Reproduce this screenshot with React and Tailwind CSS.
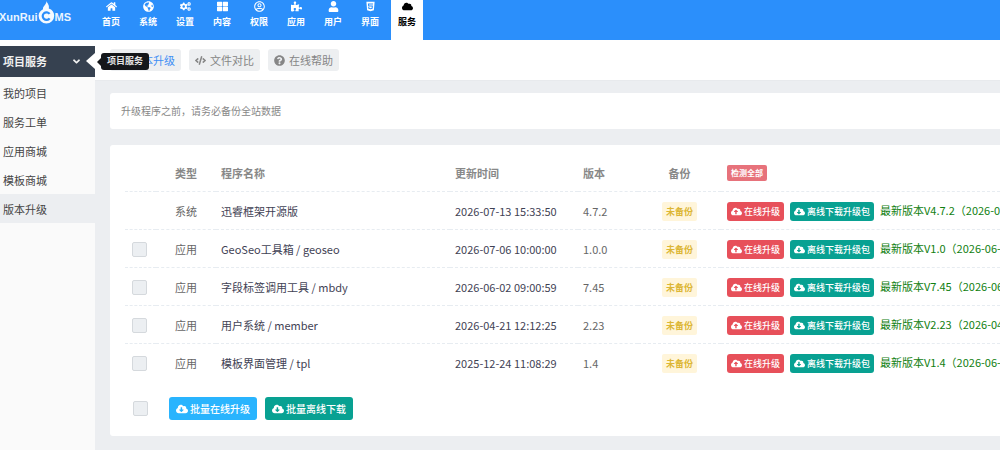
import {
  FaHome,
  FaGlobeAmericas,
  FaCogs,
  FaThLarge,
  FaRegUserCircle,
  FaPuzzlePiece,
  FaUser,
  FaHtml5,
  FaCloud,
  FaCode,
  FaQuestionCircle,
  FaCloudUploadAlt,
  FaCloudDownloadAlt,
  FaAngleDown,
  FaArrowCircleUp,
} from "react-icons/fa";

const NAV = [
  { label: "首页", Icon: FaHome },
  { label: "系统", Icon: FaGlobeAmericas },
  { label: "设置", Icon: FaCogs },
  { label: "内容", Icon: FaThLarge },
  { label: "权限", Icon: FaRegUserCircle },
  { label: "应用", Icon: FaPuzzlePiece },
  { label: "用户", Icon: FaUser },
  { label: "界面", Icon: FaHtml5 },
  { label: "服务", Icon: FaCloud, active: true },
];

const MENU = ["我的项目", "服务工单", "应用商城", "模板商城", "版本升级"];

const ROWS = [
  { type: "系统", name: "迅睿框架开源版", time: "2026-07-13 15:33:50", version: "4.7.2", latest: "最新版本V4.7.2（2026-07-13）" },
  { type: "应用", name: "GeoSeo工具箱 / geoseo", time: "2026-07-06 10:00:00", version: "1.0.0", latest: "最新版本V1.0（2026-06-06）", selectable: true },
  { type: "应用", name: "字段标签调用工具 / mbdy", time: "2026-06-02 09:00:59", version: "7.45", latest: "最新版本V7.45（2026-06-02）", selectable: true },
  { type: "应用", name: "用户系统 / member", time: "2026-04-21 12:12:25", version: "2.23", latest: "最新版本V2.23（2026-04-21）", selectable: true },
  { type: "应用", name: "模板界面管理 / tpl", time: "2025-12-24 11:08:29", version: "1.4", latest: "最新版本V1.4（2026-06-24）", selectable: true },
];

function Logo() {
  return (
    <a href="#home" aria-label="XunRuiCMS" className="-ml-[1px] flex w-[96px] shrink-0 items-start font-['Liberation_Sans',sans-serif] text-[11px] leading-4 font-bold text-[#e9f4ff]">
      <span className="pt-[9px]">XunRui</span>
      <svg viewBox="0 0 17 24" className="h-6 w-[17px] shrink-0" aria-hidden="true">
        <path fill="#f4faff" d="M8.4 1C9.4 3.6 11.6 5 10.8 8.6C14.2 9.6 16.2 12.4 16.2 15.8A7.8 7.8 0 0 1 0.6 15.8C0.6 12.8 2.4 10.6 5 9.2C4.6 6 8.8 4.6 8.4 1Z" />
        <path fill="none" stroke="#2b8ffb" strokeWidth="2.2" d="M11.6 13.9A3.8 3.8 0 1 0 11.6 18.3" />
      </svg>
      <span className="pt-[9px]">MS</span>
    </a>
  );
}

function CheckBox({ label }) {
  return (
    <input
      type="checkbox"
      aria-label={label}
      className="block size-[15px] appearance-none rounded-[2px] border border-[#d5d9dd] bg-[#eceff2] checked:bg-[#2b8ffb]"
    />
  );
}

function Tab({ Icon, children, active }) {
  return (
    <a
      href="#tab"
      className={`flex h-[22px] items-center gap-1 rounded-[3px] bg-[#edeff1] px-[6px] text-[11px] leading-4 ${active ? "text-[#3d8ef5]" : "text-[#868686]"}`}
    >
      <Icon className="size-[11px]" />
      {children}
    </a>
  );
}

export default function App() {
  return (
    <div className="flex min-h-screen flex-col overflow-hidden whitespace-nowrap bg-white font-['Noto_Sans_CJK_SC',sans-serif] text-[11px] leading-4">
      <header className="flex h-10 bg-[#2b8ffb]">
        <Logo />
        <nav className="flex gap-[5px]">
          {NAV.map(({ label, Icon, active }) => (
            <a
              key={label}
              href="#nav"
              className={`flex w-8 flex-col items-center gap-1 pt-[1px] text-[9px] leading-3 font-bold ${active ? "bg-white text-black" : "text-white"}`}
            >
              <Icon className="size-[11px]" />
              {label}
            </a>
          ))}
        </nav>
      </header>

      <div className="flex flex-1">
        <aside className="flex w-[95px] shrink-0 flex-col pt-[6px]">
          <button
            type="button"
            className="relative flex h-[31px] w-full items-center justify-between bg-[#364150] pr-[13px] pb-[1px] pl-[3px] text-[11px] font-bold text-[#f1f1f1]"
          >
            项目服务
            <FaAngleDown className="size-[11px]" />
            <svg viewBox="0 0 9 16" className="absolute top-[7px] right-0 h-4 w-[9px]" aria-hidden="true">
              <path fill="#fff" d="M9 0V16L0 8Z" />
            </svg>
            <span role="tooltip" className="absolute top-[7px] left-[101px] z-10 flex h-[17px] items-center rounded-[3px] bg-[#15171a] px-[6px] pb-[1px] text-[9px] font-bold text-[#e4e4e4]">
              项目服务
              <svg viewBox="0 0 4 8" className="absolute top-[5px] right-full h-2 w-1" aria-hidden="true">
                <path fill="#15171a" d="M4 0V8L0 4Z" />
              </svg>
            </span>
          </button>
          <nav className="flex-1 bg-[#fafafa] pt-[1px]">
            {MENU.map((item) => (
              <a
                key={item}
                href="#menu"
                className={`flex h-[29px] items-center pl-[3px] text-[#444] ${item === "版本升级" ? "bg-[#eceef1]" : ""}`}
              >
                {item}
              </a>
            ))}
          </nav>
        </aside>

        <main className="flex min-w-0 flex-1 flex-col bg-[#eceef1]">
          <div className="flex h-[41px] items-center gap-2 border-b border-[#e8eaed] bg-white pl-[15px]">
            <Tab Icon={FaArrowCircleUp} active>版本升级</Tab>
            <Tab Icon={FaCode}>文件对比</Tab>
            <Tab Icon={FaQuestionCircle}>在线帮助</Tab>
          </div>

          <div className="flex flex-col gap-4 pt-3 pl-[15px]">
            <p className="rounded-l-[3px] bg-white px-[11px] py-[10px] text-[10px] leading-4 text-[#888]">
              升级程序之前，请务必备份全站数据
            </p>

            <section className="overflow-hidden rounded-l-[3px] bg-white pt-[9px] pb-4 pl-[15px]">
              <table className="w-full table-fixed border-separate border-spacing-0">
                <colgroup>
                  <col className="w-[31px]" />
                  <col className="w-[60px]" />
                  <col className="w-[234px]" />
                  <col className="w-[128px]" />
                  <col className="w-[60px]" />
                  <col className="w-[83px]" />
                  <col />
                </colgroup>
                <thead>
                  <tr className="h-[38px] text-left text-[#888] *:border-b *:border-dashed *:border-[#e7ecf1] *:p-0">
                    <td />
                    <th className="text-center">类型</th>
                    <th><span className="pl-[5px]">程序名称</span></th>
                    <th><span className="pl-[5px]">更新时间</span></th>
                    <th><span className="pl-[5px]">版本</span></th>
                    <th className="text-center">备份</th>
                    <th>
                      <button type="button" className="ml-[6px] flex h-4 items-center rounded-[2px] bg-[#e7727b] px-1 text-[8px] font-bold text-white">
                        检测全部
                      </button>
                    </th>
                  </tr>
                </thead>
                <tbody>
                  {ROWS.map((row) => (
                    <tr key={row.name} className="h-[38px] text-[#666] *:border-b *:border-dashed *:border-[#e7ecf1] *:p-0 last:*:border-transparent">
                      <td className="align-middle">
                        <div className="pt-[2px] pl-[7px]">{row.selectable && <CheckBox label={row.name} />}</div>
                      </td>
                      <td className="text-center">{row.type}</td>
                      <td><span className="pl-[5px] text-[#3f4254]">{row.name}</span></td>
                      <td><span className="pl-[5px] text-[#3f4254]">{row.time}</span></td>
                      <td><span className="pl-[5px]">{row.version}</span></td>
                      <td className="align-middle">
                        <div className="pt-[2px]">
                          <span className="mx-auto flex h-[19px] w-[35px] items-center justify-center rounded-[2px] bg-[#fff5da] text-[9px] font-bold text-[#dcb634]">
                            未备份
                          </span>
                        </div>
                      </td>
                      <td>
                        <div className="flex items-center pt-[2px] pl-[6px] text-[9px] font-medium text-white">
                          <button type="button" className="flex h-[19px] shrink-0 items-center gap-[2px] rounded-[3px] bg-[#e7505a] px-1">
                            <FaCloudUploadAlt className="h-[9px] w-[11px]" />
                            在线升级
                          </button>
                          <button type="button" className="ml-[6px] flex h-[19px] shrink-0 items-center gap-[2px] rounded-[3px] bg-[#08a192] px-1">
                            <FaCloudDownloadAlt className="h-[9px] w-[11px]" />
                            离线下载升级包
                          </button>
                          <span className="pb-[3px] pl-[6px] text-[11px] font-normal text-[#118011]">{row.latest}</span>
                        </div>
                      </td>
                    </tr>
                  ))}
                </tbody>
              </table>

              <div className="flex items-center pt-[15px] pl-2 text-[10px] font-medium text-white">
                <CheckBox label="全选" />
                <button type="button" className="ml-[21px] flex h-[23px] items-center gap-[2px] rounded-[3px] bg-[#29b4fe] px-[7px]">
                  <FaCloudDownloadAlt className="h-[10px] w-3" />
                  批量在线升级
                </button>
                <button type="button" className="ml-2 flex h-[23px] items-center gap-[2px] rounded-[3px] bg-[#08a192] px-[7px]">
                  <FaCloudDownloadAlt className="h-[10px] w-3" />
                  批量离线下载
                </button>
              </div>
            </section>
          </div>
        </main>
      </div>
    </div>
  );
}
